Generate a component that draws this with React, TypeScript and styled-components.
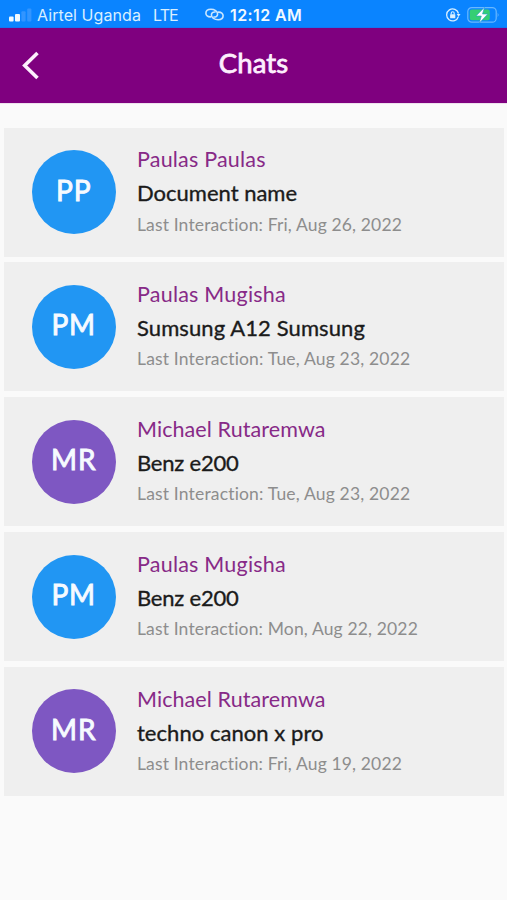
import React from "react";
import styled, { createGlobalStyle } from "styled-components";

const GlobalStyle = createGlobalStyle`
  * { box-sizing: border-box; }
  body { margin: 0; background: #fafafa; font-family: Lato, "Open Sans", sans-serif; font-variant-ligatures: none; }
`;

const Screen = styled.div`
  width: 507px;
  height: 900px;
  overflow: hidden;
  background: #fafafa;
  display: flex;
  flex-direction: column;
`;

const StatusBar = styled.div`
  height: 28px;
  flex: none;
  display: grid;
  grid-template-columns: 196px 1fr auto;
  align-items: center;
  padding: 1px 7px 0 9px;
  background: #0a84ff;
  color: #d9efff;
  font-family: Inter, Roboto, sans-serif;
  font-size: 16px;
  line-height: 26px;
  white-space: nowrap;
`;

const StatusGroup = styled.div<{ $gap: number }>`
  display: flex;
  align-items: center;
  gap: ${(p) => p.$gap}px;
`;

const Carrier = styled.span<{ $tracking: number }>`
  letter-spacing: ${(p) => p.$tracking}px;
`;

const Clock = styled.span`
  font-weight: 600;
  color: #f1f9ff;
  letter-spacing: 0.4px;
`;

const Network = styled(Carrier)`
  margin-left: 7px;
`;

const AppBar = styled.header`
  height: 75px;
  flex: none;
  display: grid;
  grid-template-columns: 60px 1fr 60px;
  align-items: center;
  background: #7f007f;
  box-shadow: 0 0 1px rgba(127, 0, 127, 0.6);
`;

const BackButton = styled.button`
  border: 0;
  padding: 0 0 2px 20px;
  background: none;
  height: 75px;
  display: flex;
  align-items: center;
`;

const Title = styled.h1`
  margin: 0;
  padding-bottom: 6px;
  text-align: center;
  color: #fdeffd;
  font-size: 27.5px;
  line-height: 36px;
  font-weight: 400;
  letter-spacing: 0.1px;
  -webkit-text-stroke: 0.8px #fdeffd;
`;

const ChatList = styled.main`
  display: flex;
  flex-direction: column;
  gap: 5.6px;
  padding: 24.5px 3px 0 4px;
`;

const ChatCard = styled.article`
  height: 129.2px;
  display: flex;
  padding: 22.7px 0 0 27.7px;
  gap: 21.3px;
  background: #efefef;
`;

const Avatar = styled.div<{ $color: string }>`
  width: 84px;
  height: 84px;
  flex: none;
  border-radius: 50%;
  display: flex;
  align-items: center;
  justify-content: center;
  padding-bottom: 5px;
  background: ${(p) => p.$color};
  color: #f6faff;
  font-size: 28px;
  font-weight: 400;
  -webkit-text-stroke: 0.9px #f6faff;
  letter-spacing: 0.8px;
`;

const Details = styled.div`
  display: flex;
  flex-direction: column;
  margin-top: -4.8px;
  white-space: nowrap;
`;

const Name = styled.div<{ $tracking: number }>`
  color: #872a87;
  font-size: 21.5px;
  line-height: 28px;
  letter-spacing: ${(p) => p.$tracking}px;
`;

const Item = styled.div<{ $tracking: number }>`
  margin-top: 5px;
  color: #1b1b1b;
  font-size: 22px;
  line-height: 30px;
  -webkit-text-stroke: 0.35px #1b1b1b;
  letter-spacing: ${(p) => p.$tracking}px;
`;

const LastSeen = styled.div<{ $tracking: number }>`
  margin-top: 4.2px;
  color: #8d8d8d;
  font-size: 17.5px;
  line-height: 24px;
  letter-spacing: ${(p) => p.$tracking}px;
`;

const BLUE = "#2196f3";
const PURPLE = "#7e57c2";

const chats = [
  { initials: "PP", color: BLUE, name: "Paulas Paulas", item: "Document name", date: "Fri, Aug 26, 2022", track: [0.2, 0, 0.14] },
  { initials: "PM", color: BLUE, name: "Paulas Mugisha", item: "Sumsung A12 Sumsung", date: "Tue, Aug 23, 2022", track: [0.22, 0.1, 0.17] },
  { initials: "MR", color: PURPLE, name: "Michael Rutaremwa", item: "Benz e200", date: "Tue, Aug 23, 2022", track: [0.09, -0.2, 0.17] },
  { initials: "PM", color: BLUE, name: "Paulas Mugisha", item: "Benz e200", date: "Mon, Aug 22, 2022", track: [0.22, -0.2, 0.14] },
  { initials: "MR", color: PURPLE, name: "Michael Rutaremwa", item: "techno canon x pro", date: "Fri, Aug 19, 2022", track: [0.09, 0.05, 0.14] },
];

const SignalIcon = () => (
  <svg width="23" height="14" viewBox="0 0 23 14">
    <rect x="0" y="8.6" width="4.6" height="4.8" rx="1" fill="#f0faff" />
    <rect x="6" y="6" width="5" height="7.4" rx="1" fill="#f0faff" />
    <rect x="12.4" y="3.2" width="4.2" height="10.2" rx="1" fill="#3295ff" />
    <rect x="18.2" y="0.4" width="4.2" height="13" rx="1" fill="#3295ff" />
  </svg>
);

const LinkIcon = () => (
  <svg width="19" height="13" viewBox="0 0 19 13" fill="none" stroke="#c9e6ff" strokeWidth="1.6" strokeLinecap="round">
    <path d="M5.6 8.9C2.700 9 0.900 7.400 0.900 5.200 0.900 2.800 3 1.300 5.900 1.300c3.600 0 6.700 2 6.700 4.700 0 1.900-1.600 3.200-3.700 3" />
    <path d="M13.400 4.100c2.900-.1 4.700 1.500 4.700 3.700 0 2.400-2.100 3.900-5 3.900-3.600 0-6.700-2-6.700-4.700 0-1.900 1.600-3.200 3.700-3" />
  </svg>
);

const RotationLockIcon = () => (
  <svg width="15" height="14" viewBox="0 0 15 14" fill="none" stroke="#d9efff">
    <path d="M12.4 8.600A6 6 0 1 1 12.500 5.500" strokeWidth="1.300" />
    <path d="M10.700 5.900h3.800l-1.900 2.900z" fill="#d9efff" stroke="none" />
    <rect x="4.100" y="6.300" width="5.200" height="3.900" rx="0.500" fill="#d9efff" stroke="none" />
    <path d="M5.200 6.500V5.200a1.500 1.500 0 0 1 3 0v1.300" strokeWidth="1.100" />
  </svg>
);

const BatteryIcon = () => (
  <svg width="33" height="18" viewBox="0 0 33 18">
    <rect x="0.800" y="1.600" width="28.400" height="14.600" rx="4" fill="none" stroke="#6ab8ff" strokeWidth="1.200" />
    <rect x="2.800" y="3.600" width="20" height="10.600" rx="2" fill="#35ce74" />
    <path d="M30.700 6.500q1.800 2.400 0 4.800z" fill="#6ab8ff" />
    <path d="M17.500 1.300L9 10h5.300l-2 7 8.500-9h-5.300z" fill="#fff" stroke="#279ccf" strokeWidth="0.600" />
  </svg>
);

const BackIcon = () => (
  <svg width="22" height="30" viewBox="0 0 22 30" fill="none" stroke="#fdeffd" strokeWidth="3.600">
    <path d="M17.500 3L4.700 15.500 17.500 28" />
  </svg>
);

export default function App() {
  return (
    <>
      <GlobalStyle />
      <Screen>
        <StatusBar>
          <StatusGroup $gap={5}>
            <SignalIcon />
            <Carrier $tracking={0.08}>Airtel Uganda</Carrier>
            <Network $tracking={-0.9}>LTE</Network>
          </StatusGroup>
          <StatusGroup $gap={6}>
            <LinkIcon />
            <Clock>12:12 AM</Clock>
          </StatusGroup>
          <StatusGroup $gap={6}>
            <RotationLockIcon />
            <BatteryIcon />
          </StatusGroup>
        </StatusBar>
        <AppBar>
          <BackButton aria-label="Back">
            <BackIcon />
          </BackButton>
          <Title>Chats</Title>
        </AppBar>
        <ChatList>
          {chats.map((c, i) => (
            <ChatCard key={i}>
              <Avatar $color={c.color}>{c.initials}</Avatar>
              <Details>
                <Name $tracking={c.track[0]}>{c.name}</Name>
                <Item $tracking={c.track[1]}>{c.item}</Item>
                <LastSeen $tracking={c.track[2]}>Last Interaction: {c.date}</LastSeen>
              </Details>
            </ChatCard>
          ))}
        </ChatList>
      </Screen>
    </>
  );
}
